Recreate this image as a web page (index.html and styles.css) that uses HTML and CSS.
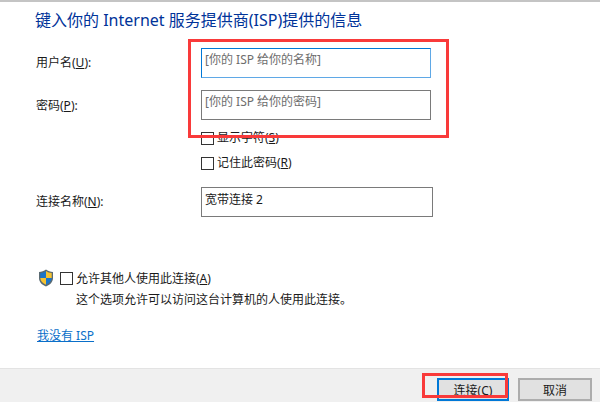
FILE: index.html
```html
<!DOCTYPE html>
<html lang="zh-CN">
<head>
    <meta charset="UTF-8">
    <title>连接到 Internet</title>
    <link rel="stylesheet" href="styles.css">
</head>
<body>
    <div class="dialog">
        <div class="content">
            <h1>键入你的 Internet 服务提供商(ISP)提供的信息</h1>
            <form class="form">
                <label class="form-label form-label-tight" for="user">用户名(<u>U</u>):</label>
                <input class="field field-focus" id="user" type="text" placeholder="[你的 ISP 给你的名称]">

                <label class="form-label" for="pass">密码(<u>P</u>):</label>
                <input class="field" id="pass" type="text" placeholder="[你的 ISP 给你的密码]">

                <div class="checks">
                    <div class="check-row"><span class="box"></span>显示字符(<u>S</u>)</div>
                    <div class="check-row"><span class="box"></span>记住此密码(<u>R</u>)</div>
                </div>

                <label class="form-label form-label-tight" for="conn">连接名称(<u>N</u>):</label>
                <input class="field field-wide" id="conn" type="text" value="宽带连接 2">
            </form>

            <div class="share">
                <div class="share-row">
                    <svg class="shield" viewBox="0 0 16 18" width="16" height="18">
                        <path d="M8 .5C6 2 3.500 3 1 3v6c0 4 3 7 7 8.500 4-1.500 7-4.500 7-8.500V3C12.500 3 10 2 8 .5z" fill="#5a6a72"/>
                        <path d="M8 2v7H2.300V4C4.500 4 6.500 3.200 8 2z" fill="#1b75c9"/>
                        <path d="M8 2c1.500 1.200 3.500 2 5.700 2v5H8z" fill="#f6c331"/>
                        <path d="M8 9H2.300c.2 3 2.500 5.500 5.700 6.800z" fill="#f6c331"/>
                        <path d="M8 9h5.700c-.2 3-2.500 5.500-5.700 6.800z" fill="#1b75c9"/>
                    </svg>
                    <span class="box"></span>允许其他人使用此连接(<u>A</u>)
                </div>
                <p class="share-note">这个选项允许可以访问这台计算机的人使用此连接。</p>
            </div>

            <a class="isp-link" href="#">我没有 ISP</a>
        </div>

        <div class="footer">
            <button class="btn btn-default" type="button">连接(<u>C</u>)</button>
            <button class="btn btn-cancel" type="button">取消</button>
        </div>

        <div class="mark mark-fields"></div>
        <div class="mark mark-button"></div>
    </div>
</body>
</html>
```

FILE: styles.css
```css
* {
    box-sizing: border-box;
}
body {
    margin: 0;
    font-family: "Noto Sans", "Noto Sans CJK SC", sans-serif;
    font-size: 12px;
    color: #1a1a1a;
    background: #fff;
}
.dialog {
    position: relative;
    display: flex;
    flex-direction: column;
    width: 600px;
    height: 402px;
    border-top: 2px solid #c4c4c4;
    overflow: hidden;
}
.content {
    flex-grow: 1;
    padding: 0 0 0 35px;
}
h1 {
    margin: 8px 0 0;
    font-size: 16px;
    font-weight: 400;
    line-height: 20px;
    color: #003399;
}
.form {
    display: grid;
    grid-template-columns: 166px 230px;
    margin-top: 18px;
}
.form-label {
    padding: 8px 0 0 1px;
    line-height: 16px;
}
.form-label-tight {
    padding-top: 7px;
}
.field {
    display: block;
    width: 230px;
    height: 30px;
    margin-bottom: 12px;
    padding: 0 3px 7px;
    border: 1px solid #7a7a7a;
    border-radius: 0;
    outline: none;
    font: inherit;
    color: #1a1a1a;
}
.field::placeholder {
    color: #6d6d6d;
    opacity: 1;
}
.field-focus {
    border-color: #0078d7 #5fa8e6 #5fa8e6 #0078d7;
}
.field-wide {
    width: 232px;
    margin-bottom: 0;
}
.checks {
    grid-column: 2;
    display: flex;
    flex-direction: column;
    gap: 9px;
    margin: -2px 0 16px;
}
.check-row {
    display: flex;
    align-items: center;
    height: 16px;
    line-height: 16px;
}
.box {
    flex-shrink: 0;
    width: 13px;
    height: 13px;
    margin-right: 3px;
    border: 1px solid #333;
    background: #fff;
}
.share {
    margin-top: 52px;
    margin-left: 3px;
}
.share-row {
    display: flex;
    align-items: center;
    height: 18px;
}
.shield {
    flex-shrink: 0;
    margin-right: 6px;
}
.share-note {
    margin: 4px 0 0 38px;
    line-height: 18px;
}
.isp-link {
    display: inline-block;
    margin-top: 19px;
    margin-left: 2px;
    line-height: 16px;
    color: #0a6fc9;
}
.footer {
    display: flex;
    justify-content: flex-end;
    gap: 9px;
    height: 34px;
    padding: 9px 8px 0 0;
    border-top: 1px solid #e3e3e3;
    background: #f0f0f0;
}
.btn {
    width: 72px;
    height: 23px;
    padding: 0;
    border: 1px solid #adadad;
    background: #e1e1e1;
    font: inherit;
    color: #1a1a1a;
}
.btn-default {
    border: 2px solid #0078d7;
}
.btn-cancel {
    width: 74px;
    border-width: 2px;
}
.mark {
    position: absolute;
    border: 3px solid #f93a3a;
}
.mark-fields {
    left: 188px;
    top: 37px;
    width: 261px;
    height: 99px;
}
.mark-button {
    left: 422px;
    top: 371px;
    width: 86px;
    height: 25px;
}
```
